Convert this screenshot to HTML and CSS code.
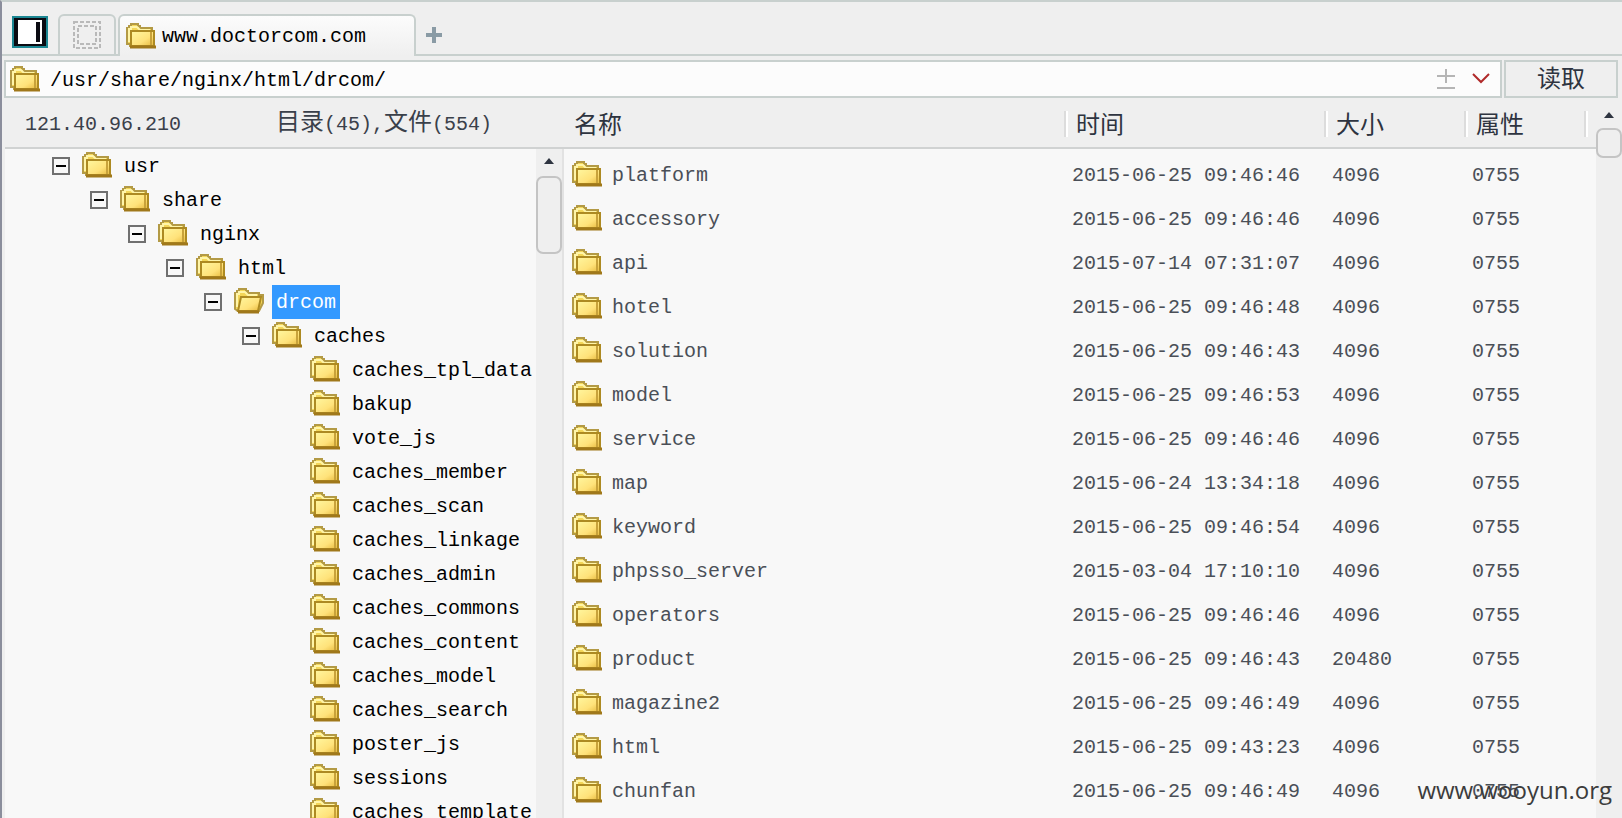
FILE: index.html
```html
<!DOCTYPE html>
<html lang="zh-CN">
<head>
    <title>www.doctorcom.com</title>
    <meta charset="utf-8">
    <link rel="stylesheet" href="styles.css">
</head>
<body>
    <svg class="defs" aria-hidden="true">
        <defs>
            <linearGradient id="gold" x1="0" y1="0" x2="1" y2="1">
                <stop offset="0" stop-color="#fff7a0"/>
                <stop offset="0.6" stop-color="#ffe27a"/>
                <stop offset="1" stop-color="#e6b73a"/>
            </linearGradient>
            <symbol id="folder" viewBox="0 0 30 26">
                <path d="M1 21V5H3V3H5V1H12V3H14V5H26V11H28V23H4V21Z" fill="#f3d658" stroke="#b39a45" stroke-width="2"/>
                <path d="M3 19V6H5V4H11L14 7H24" fill="none" stroke="#fff5a8" stroke-width="2"/>
                <path d="M5 8H28V23H5Z" fill="url(#gold)" stroke="#ad8a22" stroke-width="2"/>
                <path d="M25 9V22" stroke="#c8a23a" stroke-width="2"/>
                <path d="M4 24H30" stroke="#a0781a" stroke-width="3"/>
            </symbol>
            <symbol id="folder-open" viewBox="0 0 30 26">
                <path d="M1 21V5H3V3H5V1H12V3H14V5H25V7H29V15L25 23H4Z" fill="#f3d658" stroke="#b39a45" stroke-width="2"/>
                <path d="M3 19V6H5V4H11L14 7H23" fill="none" stroke="#fff5a8" stroke-width="2"/>
                <path d="M4 23L7 9H27L24 23Z" fill="url(#gold)" stroke="#ad8a22" stroke-width="2"/>
                <path d="M4 24H25" stroke="#a0781a" stroke-width="3"/>
            </symbol>
        </defs>
    </svg>

    <div class="app">
        <div class="tabs">
            <button class="tab-panel" aria-label="Panel">
                <svg width="36" height="32" viewBox="0 0 36 32"><path fill="#1c8793" d="M0 0h36v32H0z"/><path fill="#0b0b12" d="M2 2h32v28H2z"/><path fill="#fff" d="M6 4h24v24H6z"/><path fill="#0b0b12" d="M24 6h4v20h-4z"/></svg>
            </button>
            <button class="tab tab-home" aria-label="Home">
                <svg width="28" height="28" viewBox="0 0 28 28" fill="none" stroke="#b9b9b9" stroke-width="2" stroke-dasharray="4 2"><path d="M1 1h26v26H1z"/><path d="M5 5h18v18H5z"/></svg>
            </button>
            <button class="tab tab-active"><svg class="folder"><use href="#folder"/></svg>www.doctorcom.com</button>
            <button class="tab-add" aria-label="New tab">
                <svg width="16" height="16" viewBox="0 0 16 16"><path fill="#8a9ba5" d="M6 0h4v6h6v4h-6v6H6v-6H0V6h6z"/></svg>
            </button>
        </div>

        <div class="address">
            <div class="address-box">
                <svg class="folder"><use href="#folder"/></svg>
                <input class="path" type="text" aria-label="Path" value="/usr/share/nginx/html/drcom/">
                <button class="tool" aria-label="Bookmark">
                    <svg width="18" height="22" viewBox="0 0 18 22" fill="none" stroke="#b5b5b5" stroke-width="2"><path d="M9 1v14M0 8h18M0 20h18"/></svg>
                </button>
                <button class="tool" aria-label="History">
                    <svg width="18" height="12" viewBox="0 0 18 12" fill="none" stroke="#b02a2a" stroke-width="2"><path d="M1 1l8 8 8-8"/></svg>
                </button>
            </div>
            <button class="read">读取</button>
        </div>

        <div class="main">
            <div class="side">
                <div class="side-head"><span>121.40.96.210</span><span><span class="zh">目录</span>(45),<span class="zh">文件</span>(554)</span></div>
                <div class="side-body">
                    <ul class="tree" id="tree"></ul>
                    <div class="scroll"><span class="arrow"></span><span class="thumb thumb-tree"></span></div>
                </div>
            </div>
            <div class="files">
                <table>
                    <thead>
                        <tr><th>名称</th><th class="time">时间</th><th class="size">大小</th><th class="attr">属性</th><th class="rest"></th></tr>
                    </thead>
                    <tbody id="files"></tbody>
                </table>
            </div>
            <div class="scroll scroll-files"><span class="arrow"></span><span class="thumb"></span></div>
        </div>
        <div class="watermark">www.wooyun.org</div>
    </div>

    <script>
        const parents = ['usr', 'share', 'nginx', 'html', 'drcom', 'caches'];
        const children = ['caches_tpl_data', 'bakup', 'vote_js', 'caches_member', 'caches_scan',
            'caches_linkage', 'caches_admin', 'caches_commons', 'caches_content', 'caches_model',
            'caches_search', 'poster_js', 'sessions', 'caches_template'];
        const files = [
            ['platform', '2015-06-25 09:46:46', 4096],
            ['accessory', '2015-06-25 09:46:46', 4096],
            ['api', '2015-07-14 07:31:07', 4096],
            ['hotel', '2015-06-25 09:46:48', 4096],
            ['solution', '2015-06-25 09:46:43', 4096],
            ['model', '2015-06-25 09:46:53', 4096],
            ['service', '2015-06-25 09:46:46', 4096],
            ['map', '2015-06-24 13:34:18', 4096],
            ['keyword', '2015-06-25 09:46:54', 4096],
            ['phpsso_server', '2015-03-04 17:10:10', 4096],
            ['operators', '2015-06-25 09:46:46', 4096],
            ['product', '2015-06-25 09:46:43', 20480],
            ['magazine2', '2015-06-25 09:46:49', 4096],
            ['html', '2015-06-25 09:43:23', 4096],
            ['chunfan', '2015-06-25 09:46:49', 4096]
        ];

        function folder(name) {
            return '<svg class="folder"><use href="#' + name + '"/></svg>';
        }

        function treeRow(name, depth, isParent) {
            const open = name === 'drcom';
            const toggle = isParent ? '<button class="toggle" aria-label="Collapse"></button>' : '<span class="no-toggle"></span>';
            return '<li style="padding-left:' + depth * 38 + 'px">' + toggle + folder(open ? 'folder-open' : 'folder') +
                '<span class="label' + (open ? ' selected' : '') + '">' + name + '</span></li>';
        }

        document.getElementById('tree').innerHTML =
            parents.map((name, i) => treeRow(name, i, true)).join('') +
            children.map(name => treeRow(name, parents.length, false)).join('');

        document.getElementById('files').innerHTML = files.map(f =>
            '<tr><td><div class="name">' + folder('folder') + f[0] + '</div></td><td>' + f[1] + '</td><td>' + f[2] + '</td><td>0755</td><td></td></tr>'
        ).join('');
    </script>
</body>
</html>
```

FILE: styles.css
```css
* {
    box-sizing: border-box;
}
body {
    margin: 0;
    font-family: "Liberation Mono", "Noto Sans CJK SC", monospace;
    font-size: 20px;
    color: #000;
    background: #efefef;
}
button, input {
    font: inherit;
    color: inherit;
    border: none;
    padding: 0;
    background: none;
}
.defs {
    position: absolute;
    width: 0;
    height: 0;
}
.app {
    position: relative;
    display: flex;
    flex-direction: column;
    height: 100vh;
    overflow: hidden;
    border-left: 2px solid #8b8e9c;
    border-top: 2px solid #c8d0ce;
}
.folder {
    flex: none;
    width: 30px;
    height: 26px;
}

/* tabs */
.tabs {
    display: flex;
    align-items: flex-end;
    height: 54px;
    flex: none;
    box-shadow: inset 0 -2px #c8d0ce;
}
.tab-panel {
    width: 56px;
    height: 48px;
    padding-left: 10px;
    text-align: left;
}
.tab-panel svg, .tab-home svg, .tool svg, .tab-add svg {
    display: block;
}
.tab {
    display: flex;
    align-items: center;
    height: 42px;
    border: 2px solid #c8d0ce;
    border-radius: 6px 6px 0 0;
}
.tab-home {
    width: 58px;
    justify-content: center;
    margin-right: 2px;
}
.tab-active {
    width: 298px;
    padding: 0 6px;
    gap: 6px;
    border-bottom: none;
    background: linear-gradient(#fcfcfc, #efefef);
}
.tab-add {
    height: 42px;
    padding: 0 10px;
}

/* address bar */
.address {
    display: flex;
    gap: 2px;
    padding: 4px 4px 0 2px;
    flex: none;
}
.address-box {
    display: flex;
    align-items: center;
    flex: 1;
    height: 38px;
    padding: 0 10px 0 4px;
    border: 2px solid #c8d0ce;
    background: #fcfcfc;
}
.path {
    flex: 1;
    min-width: 0;
    padding: 2px 0 0 10px;
    outline: none;
}
.tool {
    margin-left: 17px;
}
.read {
    width: 114px;
    height: 38px;
    padding-top: 4px;
    border: 2px solid #c8d0ce;
    font-size: 24px;
    line-height: 30px;
    color: #2e3440;
}

/* panes */
.main {
    display: flex;
    flex: 1;
    min-height: 0;
    padding-left: 3px;
}
.side {
    display: flex;
    flex-direction: column;
    width: 559px;
    flex: none;
}
.side-head {
    display: flex;
    align-items: center;
    justify-content: space-between;
    height: 51px;
    flex: none;
    padding: 4px 72px 0 20px;
    border-bottom: 2px solid #d0d2d2;
    line-height: 24px;
    color: #3a404a;
}
.zh {
    font-size: 24px;
}
.side-body {
    display: flex;
    flex: 1;
    min-height: 0;
    border-right: 2px solid #e2e2e2;
    background: #f8f8f8;
}
.tree {
    flex: 1;
    margin: 0;
    padding: 0 0 0 47px;
    list-style: none;
    overflow: hidden;
}
.tree li {
    display: flex;
    align-items: center;
    height: 34px;
}
.tree .folder {
    margin-bottom: 2px;
}
.toggle, .no-toggle {
    width: 18px;
    height: 18px;
    margin-right: 12px;
    flex: none;
}
.toggle {
    border: 2px solid #707070;
    background: linear-gradient(#000, #000) center / 10px 2px no-repeat;
}
.label {
    height: 34px;
    margin-left: 8px;
    padding: 0 4px;
    line-height: 36px;
}
.selected {
    color: #fff;
    background: #3399ff;
}
.scroll {
    display: flex;
    flex-direction: column;
    align-items: center;
    width: 26px;
    flex: none;
    padding-top: 9px;
    background: #efefef;
}
.arrow {
    border: 5px solid transparent;
    border-top: none;
    border-bottom: 6px solid #2e3440;
}
.thumb {
    width: 26px;
    height: 30px;
    margin-top: 12px;
    border: 2px solid #c4c4c4;
    border-radius: 7px;
}
.thumb-tree {
    height: 78px;
}
.scroll-files {
    padding-top: 14px;
}
.scroll-files .thumb {
    margin-top: 10px;
}
.files {
    flex: 1;
    min-width: 0;
    overflow: hidden;
    background: #f8f8f8;
}
table {
    width: 100%;
    table-layout: fixed;
    border-collapse: separate;
    border-spacing: 0;
}
th, td {
    padding: 2px 0 0 8px;
    font-weight: normal;
    text-align: left;
    white-space: nowrap;
}
th {
    height: 51px;
    padding: 8px 0 0 10px;
    border-bottom: 2px solid #d0d2d2;
    font-size: 24px;
    line-height: 24px;
    color: #2e3440;
    background: #efefef;
}
.time, .size, .attr, .rest {
    padding-left: 12px;
    background: linear-gradient(90deg, #dcdcdc 2px, #fff 2px) left 13px / 4px 26px no-repeat #efefef;
}
.time {
    width: 260px;
}
.size {
    width: 140px;
}
.attr {
    width: 120px;
}
.rest {
    width: 12px;
    padding: 0;
}
td {
    height: 44px;
    color: #4a4f57;
}
tbody::before {
    content: "";
    display: block;
    height: 3px;
}
.name {
    display: flex;
    align-items: center;
    gap: 10px;
}
.name .folder {
    margin-bottom: 2px;
}

.watermark {
    position: absolute;
    right: 10px;
    bottom: 12px;
    font-family: "Open Sans", sans-serif;
    font-size: 24px;
    color: #3c3c3c;
}
```
